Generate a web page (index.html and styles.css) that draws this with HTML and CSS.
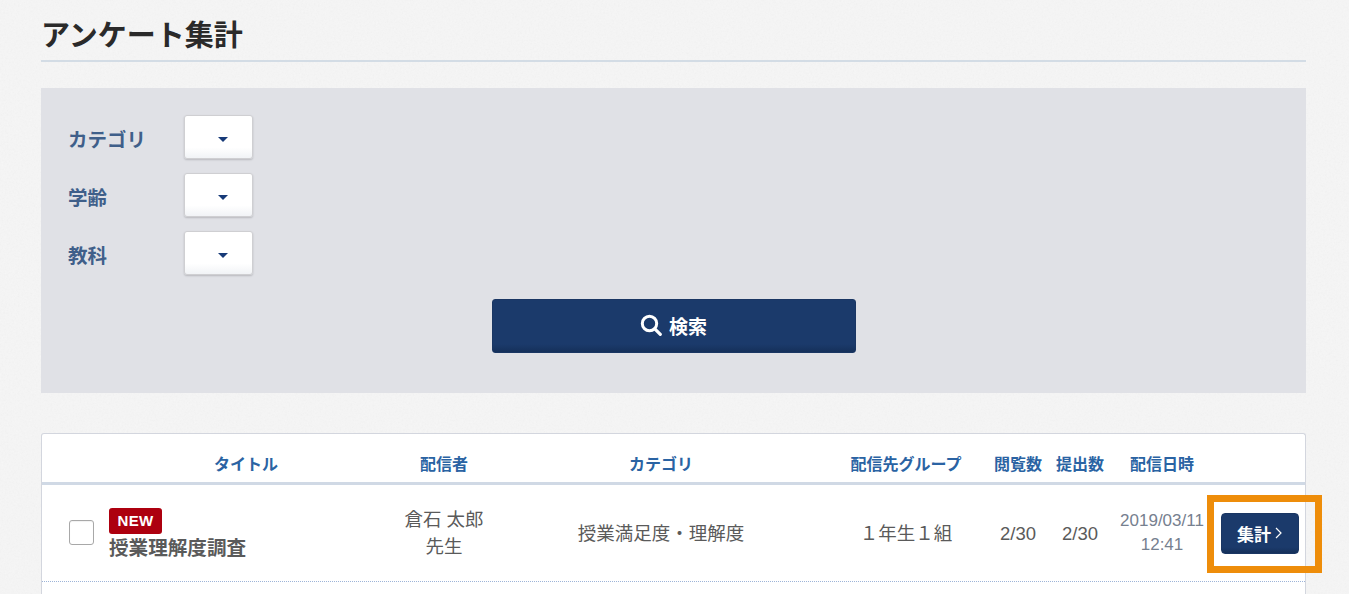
FILE: index.html
```html
<!DOCTYPE html>
<html lang="ja">
<head>
<meta charset="utf-8">
<title>アンケート集計</title>
<link rel="stylesheet" href="styles.css">
</head>
<body>
<main class="page">
  <h1 class="title">アンケート集計</h1>
  <section class="filters">
    <div class="filter-row"><span class="filter-label">カテゴリ</span><button class="select"><span class="caret"></span></button></div>
    <div class="filter-row"><span class="filter-label">学齢</span><button class="select"><span class="caret"></span></button></div>
    <div class="filter-row"><span class="filter-label">教科</span><button class="select"><span class="caret"></span></button></div>
    <button class="search">
      <svg class="search-icon" viewBox="0 0 22 22" width="22" height="22" aria-hidden="true"><circle cx="9.5" cy="9.5" r="7.2" fill="none" stroke="#fff" stroke-width="3"/><path d="M14.8 14.8 20.3 20.3" stroke="#fff" stroke-width="3.2" stroke-linecap="round"/></svg>
      <span>検索</span>
    </button>
  </section>
  <section class="table">
    <div class="row head">
      <div></div>
      <div>タイトル</div>
      <div>配信者</div>
      <div>カテゴリ</div>
      <div>配信先グループ</div>
      <div>閲覧数</div>
      <div>提出数</div>
      <div>配信日時</div>
      <div></div>
    </div>
    <div class="row body">
      <div class="check-cell"><span class="checkbox"></span></div>
      <div class="title-cell"><span class="badge">NEW</span><strong class="survey-name">授業理解度調査</strong></div>
      <div class="teacher">倉石 太郎<br>先生</div>
      <div>授業満足度・理解度</div>
      <div>１年生１組</div>
      <div class="num">2/30</div>
      <div class="num">2/30</div>
      <div class="date">2019/03/11<br>12:41</div>
      <div class="action"><button class="tally">集計<svg class="chev" viewBox="0 0 7 12" width="7" height="12" aria-hidden="true"><path d="M1 1l5 5-5 5" fill="none" stroke="#fff" stroke-width="1.2"/></svg></button></div>
    </div>
  </section>
  <div class="highlight"></div>
</main>
</body>
</html>
```
FILE: styles.css
```css
* { box-sizing: border-box; }
html, body { margin: 0; padding: 0; height: 594px; overflow: hidden; background: #fff; }
body { font-family: "Liberation Sans", "Noto Sans CJK JP", sans-serif; color: #5a5a5a; }
button { font-family: inherit; padding: 0; cursor: pointer; }
.page {
  position: relative;
  width: 1349px;
  height: 594px;
  padding: 0 43px 0 41px;
  background-color: #f7f7f7;
  background-image: url("data:image/svg+xml,%3Csvg xmlns='http://www.w3.org/2000/svg' width='300' height='300'%3E%3Cfilter id='n'%3E%3CfeTurbulence type='fractalNoise' baseFrequency='.55' numOctaves='3' stitchTiles='stitch'/%3E%3CfeColorMatrix values='0 0 0 0 .55 0 0 0 0 .55 0 0 0 0 .55 0 0 0 .14 0'/%3E%3C/filter%3E%3Crect width='300' height='300' filter='url(%23n)'/%3E%3C/svg%3E");
  overflow: hidden;
}
.title {
  margin: 0;
  height: 62px;
  padding-top: 16px;
  font-size: 29px;
  line-height: 40px;
  font-weight: 700;
  color: #2a2a2a;
  border-bottom: 2px solid #d3dce5;
}
.filters {
  display: flex;
  flex-direction: column;
  margin-top: 26px;
  height: 305px;
  padding: 27px 27px 0;
  background: #e0e1e6;
}
.filter-row {
  display: flex;
  align-items: center;
  height: 44px;
  margin-bottom: 14px;
}
.filter-label {
  width: 116px;
  font-size: 19.5px;
  font-weight: 700;
  color: #3f5f8a;
  line-height: 44px;
  padding-top: 6px;
}
.select {
  position: relative;
  width: 69px;
  height: 44px;
  background: linear-gradient(#fff 75%, #f1f3f6);
  border: 1px solid #cfcfd2;
  border-radius: 3px;
  box-shadow: 0 1px 2px rgba(0,0,0,.18);
}
.caret {
  position: absolute;
  left: 33px;
  top: 21px;
  width: 0;
  height: 0;
  border-left: 5px solid transparent;
  border-right: 5px solid transparent;
  border-top: 5px solid #173a78;
}
.search {
  display: flex;
  align-items: center;
  justify-content: center;
  gap: 7px;
  align-self: center;
  width: 364px;
  height: 54px;
  margin-top: 10px;
  padding-bottom: 2px;
  color: #fff;
  font-size: 19px;
  font-weight: 700;
  background: linear-gradient(#1b3a6b 85%, #15305a);
  border: 1px solid #1a3663;
  border-radius: 3px;
}
.table {
  margin-top: 40px;
  height: 200px;
  background: #fff;
  border: 1px solid #d3d6de;
  border-bottom: 0;
  border-radius: 3px 3px 0 0;
}
.row {
  display: grid;
  grid-template-columns: 58px 292px 104px 330px 160px 64px 60px 104px 91px;
  text-align: center;
}
.row > div { display: flex; align-items: center; justify-content: center; text-align: center; }
.head {
  height: 51px;
  padding-top: 9px;
  font-size: 16px;
  font-weight: 700;
  color: #2a63a3;
  border-bottom: 3px solid #d0d9e5;
}
.body {
  height: 97px;
  font-size: 18.5px;
  line-height: 27px;
  color: #5a5a5a;
  border-bottom: 1px dotted #9db4d8;
}
.checkbox {
  display: block;
  width: 25px;
  height: 25px;
  margin-left: 20px;
  margin-top: -1px;
  background: #fff;
  border: 1px solid #a8a8a8;
  border-radius: 3px;
  box-shadow: inset 0 1px 1px rgba(0,0,0,.06);
}
.row > .title-cell {
  flex-direction: column;
  align-items: flex-start;
  justify-content: center;
  padding-left: 9px;
  padding-top: 3px;
}
.badge {
  width: 53px;
  height: 26px;
  font-size: 15px;
  line-height: 26px;
  font-weight: 700;
  color: #fff;
  background: #ad000f;
  border-radius: 3px;
  letter-spacing: .3px;
}
.survey-name {
  font-size: 19.6px;
  line-height: 28px;
  color: #5a5a5a;
  font-weight: 700;
}
.num { font-size: 18.5px; }
.date { font-size: 17px; line-height: 24px; color: #76808f; }
.tally {
  display: flex;
  align-items: center;
  justify-content: center;
  gap: 4px;
  width: 78px;
  height: 41px;
  color: #fff;
  font-size: 17px;
  font-weight: 700;
  background: linear-gradient(#1b3a6b 85%, #15305a);
  border: 1px solid #1a3663;
  border-radius: 4px;
}
.highlight {
  position: absolute;
  left: 1207px;
  top: 495px;
  width: 115px;
  height: 78px;
  border: 7px solid #ee8d0a;
}
```
